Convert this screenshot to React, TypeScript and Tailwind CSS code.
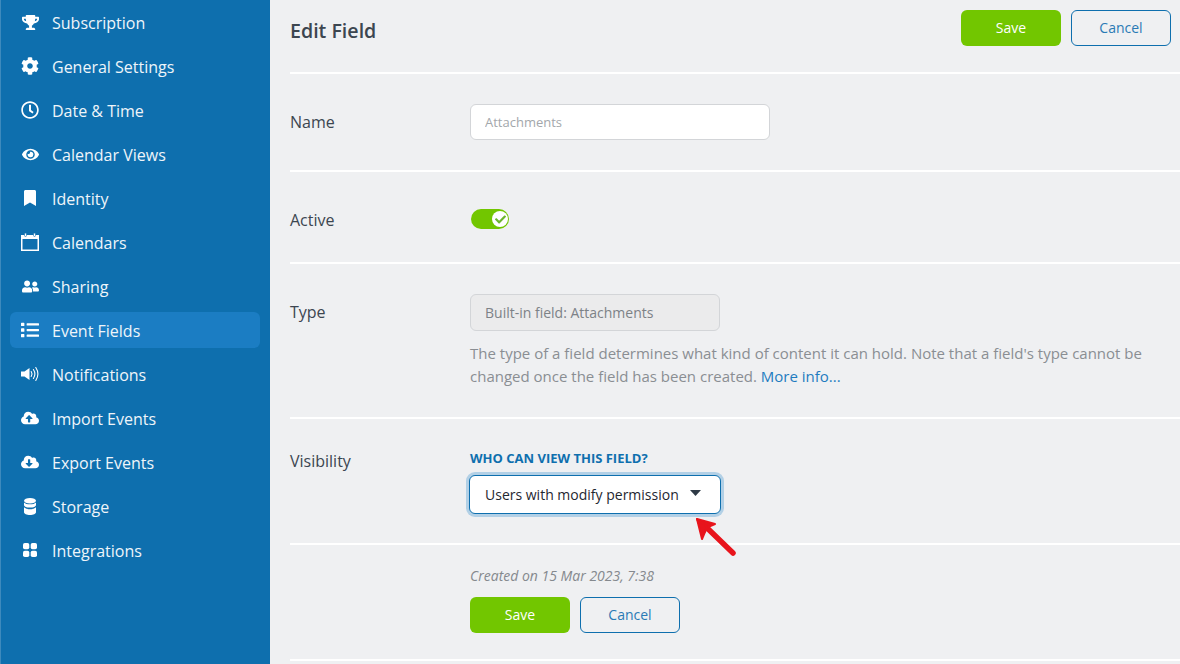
import React from "react";
import { FaTrophy, FaCog, FaRegClock, FaEye, FaBookmark, FaUserFriends, FaList, FaCloudUploadAlt, FaCloudDownloadAlt, FaCheck } from "react-icons/fa";

const Cal = () => (
  <svg width="18" height="18" viewBox="0 0 18 18" fill="white">
    <path fillRule="evenodd" d="M0 2h18v16H0zM1.5 6v10.5h15V6z" />
    <rect x="3.5" y="0" width="2" height="3.5" rx="1" fill="white" stroke="#0e6fae" strokeWidth="0.6" />
    <rect x="12.5" y="0" width="2" height="3.5" rx="1" fill="white" stroke="#0e6fae" strokeWidth="0.6" />
  </svg>
);
const Grid4 = () => (
  <svg width="14" height="14" viewBox="0 0 14 14" fill="white">
    <rect x="0" y="0" width="6.3" height="6.3" rx="1.8" />
    <rect x="7.7" y="0" width="6.3" height="6.3" rx="1.8" />
    <rect x="0" y="7.7" width="6.3" height="6.3" rx="1.8" />
    <rect x="7.7" y="7.7" width="6.3" height="6.3" rx="1.8" />
  </svg>
);
const Speaker = () => (
  <svg width="18" height="16" viewBox="0 0 18 16" fill="none">
    <path d="M0 5.5h3.5L8.5 2v12L3.5 10.5H0z" fill="white" />
    <path d="M10.2 5.5c1 1.5 1 3.500 0 5" stroke="white" strokeWidth="1.1" strokeLinecap="round" />
    <path d="M12.4 3.500c1.800 2.700 1.800 6.300 0 9" stroke="white" strokeWidth="1.100" strokeLinecap="round" />
    <path d="M14.800 1.500c2.600 4 2.600 9 0 13" stroke="white" strokeWidth="1.100" strokeLinecap="round" />
  </svg>
);
const Db = () => (
  <svg width="12" height="17" viewBox="0 0 12 17" fill="white">
    <ellipse cx="6" cy="2.800" rx="6" ry="2.800" />
    <path d="M0 4.400c1.200 1.300 3.500 1.900 6 1.900s4.800-.6 6-1.900v2.500c0 1.500-2.700 2.700-6 2.700S0 8.400 0 6.900z" />
    <path d="M0 9.300c1.200 1.300 3.500 1.900 6 1.900s4.800-.6 6-1.900v4.900C12 15.800 9.300 17 6 17s-6-1.200-6-2.800z" />
  </svg>
);

const items: { label: string; icon: React.ReactNode; active?: boolean }[] = [
  { label: "Subscription", icon: <FaTrophy size={17} /> },
  { label: "General Settings", icon: <FaCog size={18} /> },
  { label: "Date & Time", icon: <FaRegClock size={18} /> },
  { label: "Calendar Views", icon: <FaEye size={17} /> },
  { label: "Identity", icon: <FaBookmark size={16} /> },
  { label: "Calendars", icon: <Cal /> },
  { label: "Sharing", icon: <FaUserFriends size={17} /> },
  { label: "Event Fields", icon: <FaList size={18} />, active: true },
  { label: "Notifications", icon: <Speaker /> },
  { label: "Import Events", icon: <FaCloudUploadAlt size={18} /> },
  { label: "Export Events", icon: <FaCloudDownloadAlt size={18} /> },
  { label: "Storage", icon: <Db /> },
  { label: "Integrations", icon: <Grid4 /> },
];

const Buttons = () => (
  <div className="flex gap-[10px]">
    <button className="w-[100px] h-9 rounded-[6px] bg-[#72c600] text-white text-[14px] leading-[34px] pb-[1px]">Save</button>
    <button className="w-[100px] h-9 rounded-[6px] border border-[#0e6fae] text-[#2a7ab5] text-[14px] leading-[34px] pb-[1px]">Cancel</button>
  </div>
);

const Row = ({ label, className, labelClass, children }: { label?: string; className: string; labelClass: string; children: React.ReactNode }) => (
  <div className={`flex border-b-2 border-white ${className}`}>
    <div className={`w-[180px] shrink-0 text-[16px] text-[#3c4650] ${labelClass}`}>{label}</div>
    <div className="flex-1 pr-[10px]">{children}</div>
  </div>
);

export default function App() {
  return (
    <div className="flex h-[664px] w-[1180px] overflow-hidden bg-[#eff0f2] font-['Open_Sans',sans-serif]">
      <aside className="w-[270px] shrink-0 bg-[#0e6fae] border-l border-[#3d8abd] pl-[9px] pr-[10px] pt-[4px] flex flex-col gap-2">
        {items.map((it) => (
          <div key={it.label} className={`h-9 shrink-0 flex items-center rounded-[6px] text-[16px] text-[#eef5fa] ${it.active ? "bg-[#1b7dc3]" : ""}`}>
            <span className="w-[42px] pr-[2px] flex justify-center text-white">{it.icon}</span>
            <span className="pt-[2px]">{it.label}</span>
          </div>
        ))}
      </aside>
      <main className="flex-1 pl-5 flex flex-col">
        <div className="h-[74px] shrink-0 border-b-2 border-white flex justify-between pt-[10px] pr-[9px]">
          <h1 className="text-[19.6px] font-semibold text-[#3c4650] leading-[42px]">Edit Field</h1>
          <Buttons />
        </div>
        <Row label="Name" className="h-[98px] pt-[30px]" labelClass="leading-9">
          <input readOnly placeholder="Attachments" className="w-[300px] h-9 px-[14px] rounded-[6px] bg-white border border-[#d3d5d8] text-[13px] placeholder:text-[#a3a7ab] outline-none" />
        </Row>
        <Row label="Active" className="h-[92px] pt-[36px]" labelClass="leading-6">
          <div className="relative mt-[1px] w-[38px] h-5 rounded-full bg-[#72c600] ml-[1px]">
            <div className="absolute right-[1px] top-[2px] w-4 h-4 rounded-full bg-white flex items-center justify-center">
              <FaCheck size={11} className="text-[#6cb52d]" />
            </div>
          </div>
        </Row>
        <Row label="Type" className="h-[155px] pt-[30px]" labelClass="leading-9">
          <div className="w-[250px] h-[37px] px-[14px] flex items-center rounded-[6px] bg-[#ebebec] border border-[#d3d5d8] text-[14px] text-[#7d8287]">Built-in field: Attachments</div>
          <p className="mt-[11px] pr-[10px] text-[15px] leading-[23px] text-[#8a8e93]">
            The type of a field determines what kind of content it can hold. Note that a field's type cannot be changed once the field has been created. <span className="text-[#1f7cc0]">More info...</span>
          </p>
        </Row>
        <Row label="Visibility" className="h-[126px] pt-[30px]" labelClass="leading-6">
          <div className="text-[13px] leading-[18px] font-bold text-[#0e6fae]">WHO CAN VIEW THIS FIELD?</div>
          <div className="mt-[8px] -ml-[1px] w-[252px] h-[39px] flex items-center justify-between pl-[15px] pr-[19px] rounded-[6px] bg-white border border-[#0e6fae] ring-[3px] ring-[#b2d0e6] text-[14px] text-[#1f2730]">
            Users with modify permission
            <svg width="11" height="6" viewBox="0 0 11 6" className="mb-[3px]"><path d="M0 0h11L5.5 6z" fill="#2e3a46" /></svg>
          </div>
        </Row>
        <Row className="h-[116px] pt-[20px]" labelClass="">
          <div className="text-[14px] italic text-[#85898e] leading-[22px]">Created on 15 Mar 2023, 7:38</div>
          <div className="mt-[10px]"><Buttons /></div>
        </Row>
      </main>
      <svg className="absolute left-[690px] top-[512px]" width="50" height="50" viewBox="0 0 50 50" fill="none">
        <path d="M43 41 L13 12" stroke="#e8141c" strokeWidth="5.5" strokeLinecap="round" />
        <path d="M7 7 L25 12 L18 15 L14 21 Z" fill="#e8141c" stroke="#e8141c" strokeWidth="2" strokeLinejoin="round" />
        <path d="M7 7 L12 27 L17 15 Z" fill="#e8141c" stroke="#e8141c" strokeWidth="2" strokeLinejoin="round" />
      </svg>
    </div>
  );
}
